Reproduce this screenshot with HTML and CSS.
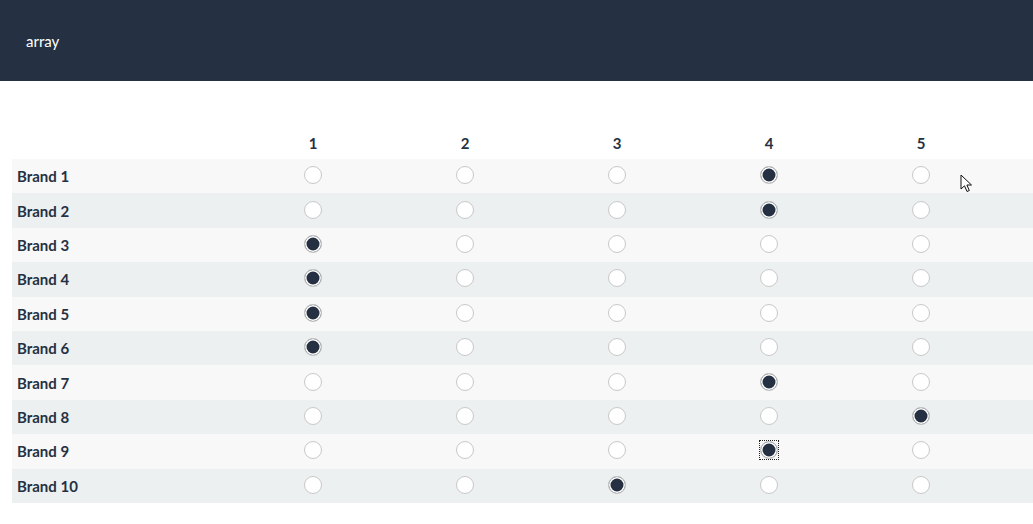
FILE: index.html
```html
<!DOCTYPE html>
<html>
<head>
<meta charset="utf-8">
<link rel="stylesheet" href="styles.css">
</head>
<body>
<header class="topbar"><span class="title">array</span></header>
<main class="content">
  <div class="grid">
    <div class="row head">
      <div class="label"></div>
      <div class="cell">1</div><div class="cell">2</div><div class="cell">3</div><div class="cell">4</div><div class="cell">5</div>
    </div>
    <div class="row odd"><div class="label">Brand 1</div><div class="cell"><span class="radio"></span></div><div class="cell"><span class="radio"></span></div><div class="cell"><span class="radio"></span></div><div class="cell"><span class="radio on"></span></div><div class="cell"><span class="radio"></span></div></div>
    <div class="row even"><div class="label">Brand 2</div><div class="cell"><span class="radio"></span></div><div class="cell"><span class="radio"></span></div><div class="cell"><span class="radio"></span></div><div class="cell"><span class="radio on"></span></div><div class="cell"><span class="radio"></span></div></div>
    <div class="row odd"><div class="label">Brand 3</div><div class="cell"><span class="radio on"></span></div><div class="cell"><span class="radio"></span></div><div class="cell"><span class="radio"></span></div><div class="cell"><span class="radio"></span></div><div class="cell"><span class="radio"></span></div></div>
    <div class="row even"><div class="label">Brand 4</div><div class="cell"><span class="radio on"></span></div><div class="cell"><span class="radio"></span></div><div class="cell"><span class="radio"></span></div><div class="cell"><span class="radio"></span></div><div class="cell"><span class="radio"></span></div></div>
    <div class="row odd"><div class="label">Brand 5</div><div class="cell"><span class="radio on"></span></div><div class="cell"><span class="radio"></span></div><div class="cell"><span class="radio"></span></div><div class="cell"><span class="radio"></span></div><div class="cell"><span class="radio"></span></div></div>
    <div class="row even"><div class="label">Brand 6</div><div class="cell"><span class="radio on"></span></div><div class="cell"><span class="radio"></span></div><div class="cell"><span class="radio"></span></div><div class="cell"><span class="radio"></span></div><div class="cell"><span class="radio"></span></div></div>
    <div class="row odd"><div class="label">Brand 7</div><div class="cell"><span class="radio"></span></div><div class="cell"><span class="radio"></span></div><div class="cell"><span class="radio"></span></div><div class="cell"><span class="radio on"></span></div><div class="cell"><span class="radio"></span></div></div>
    <div class="row even"><div class="label">Brand 8</div><div class="cell"><span class="radio"></span></div><div class="cell"><span class="radio"></span></div><div class="cell"><span class="radio"></span></div><div class="cell"><span class="radio"></span></div><div class="cell"><span class="radio on"></span></div></div>
    <div class="row odd"><div class="label">Brand 9</div><div class="cell"><span class="radio"></span></div><div class="cell"><span class="radio"></span></div><div class="cell"><span class="radio"></span></div><div class="cell"><span class="radio on focus"></span></div><div class="cell"><span class="radio"></span></div></div>
    <div class="row even"><div class="label">Brand 10</div><div class="cell"><span class="radio"></span></div><div class="cell"><span class="radio"></span></div><div class="cell"><span class="radio on"></span></div><div class="cell"><span class="radio"></span></div><div class="cell"><span class="radio"></span></div></div>
  </div>
</main>
<svg class="cursor" width="14" height="20" viewBox="0 0 14 20"><path d="M1 1 L1 15 L4.5 11.8 L7 17.5 L9.3 16.5 L6.9 11 L11.5 11 Z" fill="#fff" stroke="#111" stroke-width="1" stroke-linejoin="round"/></svg>
</body>
</html>
```
FILE: styles.css
```css
html, body { margin: 0; padding: 0; background: #fff; }
body { font-family: Lato, "Noto Sans", sans-serif; color: #253142; overflow: hidden; position: relative; }
.topbar { height: 81px; background: #253142; display: flex; align-items: center; padding-left: 26px; }
.title { color: #fff; font-size: 15px; }
.content { padding: 44px 0 0 12px; }
.grid { display: flex; flex-direction: column; }
.row { display: grid; grid-template-columns: 225px repeat(5, 152px) 1fr; height: 34.4px; align-items: center; }
.row.head { font-weight: 700; font-size: 15px; height: 34px; align-items: center; }
.row.head .cell { padding-top: 1px; }
.odd { background: #f8f8f8; }
.even { background: #ecf0f1; }
.label { padding-left: 5px; font-weight: 700; font-size: 15px; }
.cell { display: flex; justify-content: center; align-items: center; }
.radio { width: 16px; height: 16px; border: 1px solid #c8c8c8; border-radius: 50%; background: #fff; box-sizing: content-box; position: relative; top: -1px; }
.radio.on { background: #253142; box-shadow: inset 0 0 0 1.5px #fff; }
.radio.focus::after { content: ""; position: absolute; left: -2px; top: -2px; width: 18px; height: 18px; border: 1px dotted #222; }
.cursor { position: absolute; left: 960px; top: 174px; }
```
